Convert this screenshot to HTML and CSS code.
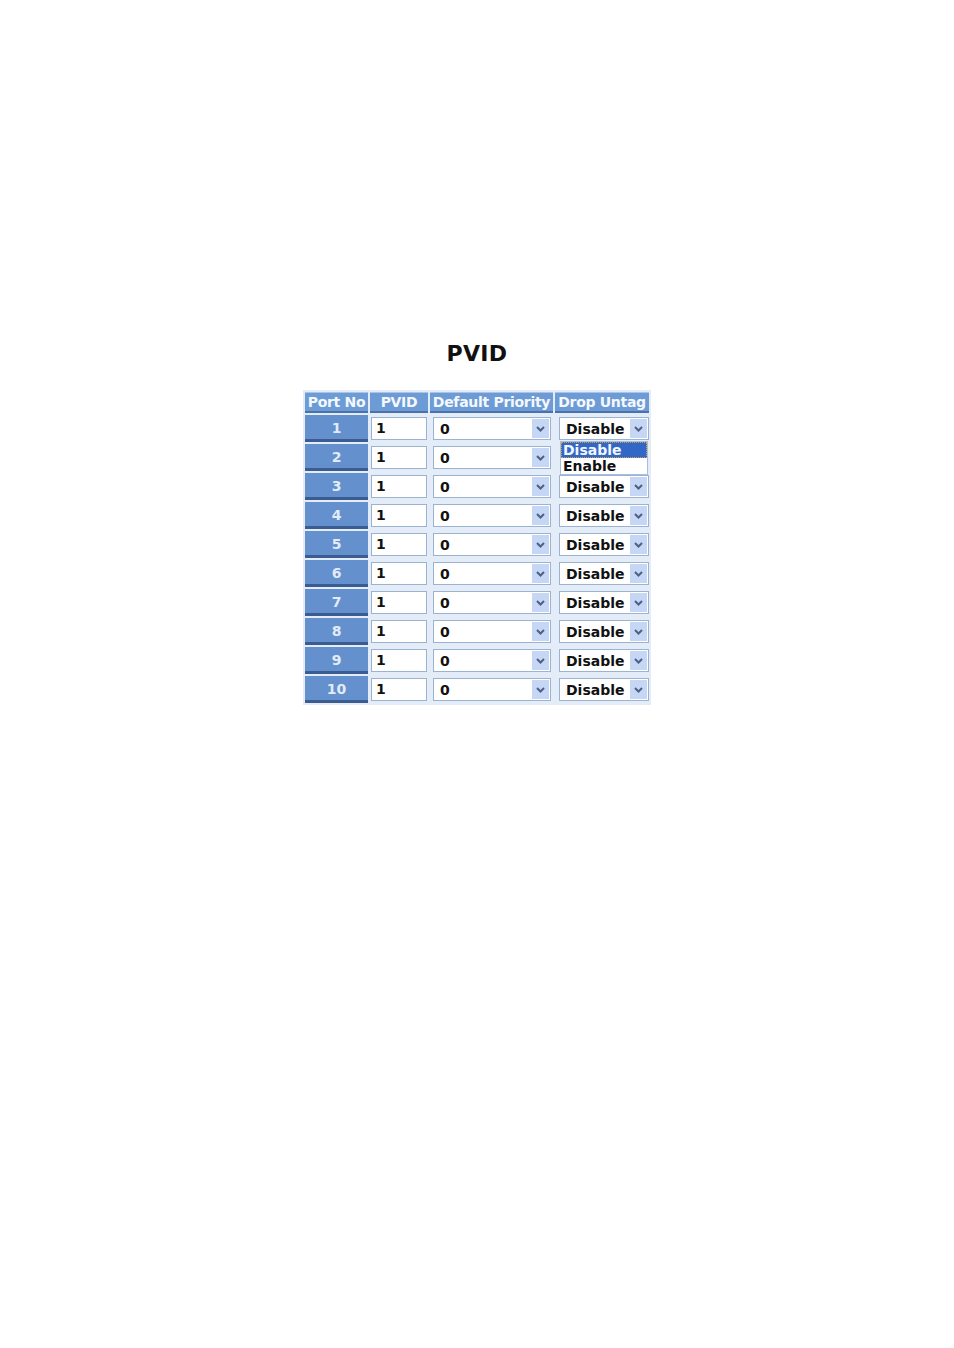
FILE: index.html
```html
<!DOCTYPE html>
<html>
<head>
<meta charset="utf-8">
<link rel="stylesheet" href="styles.css">
</head>
<body>
<div class="page">
  <h1 class="title">PVID</h1>
  <table class="grid">
    <colgroup>
      <col class="c-port"><col class="c-pvid"><col class="c-prio"><col class="c-drop">
    </colgroup>
    <thead>
      <tr><th>Port No</th><th>PVID</th><th>Default Priority</th><th>Drop Untag</th></tr>
    </thead>
    <tbody id="rows"></tbody>
  </table>
</div>
<script src="app.js"></script>
</body>
</html>
```

FILE: app.js
```js
var tb = document.getElementById('rows');
var arrow = '<span class="btn"><svg width="9" height="6" viewBox="0 0 9 6"><path d="M1 1 L4.5 4.5 L8 1" fill="none" stroke="#4d6185" stroke-width="2"/></svg></span>';
for (var i = 1; i <= 10; i++) {
  var tr = document.createElement('tr');
  var drop = '<div class="sel drop' + (i === 2 ? ' hidden' : '') + '"><span class="val">Disable</span>' + arrow + '</div>';
  if (i === 1) {
    drop += '<div class="list"><div class="opt on">Disable</div><div class="opt">Enable</div></div>';
  }
  tr.innerHTML =
    '<td class="port">' + i + '</td>' +
    '<td class="cell"><div class="inp">1</div></td>' +
    '<td class="cell"><div class="sel prio"><span class="val">0</span>' + arrow + '</div></td>' +
    '<td class="cell dropcell">' + drop + '</td>';
  tb.appendChild(tr);
}
```

FILE: styles.css
```css
html, body {
  margin: 0;
  padding: 0;
  background: #ffffff;
}
body {
  font-family: "DejaVu Sans", Verdana, sans-serif;
}
.page {
  display: flex;
  flex-direction: column;
  align-items: center;
  padding-top: 342px;
}
.title {
  margin: 0 0 24px 0;
  font-size: 22px;
  line-height: 24px;
  font-weight: bold;
  color: #111;
  letter-spacing: 0.3px;
}
.grid {
  border-collapse: separate;
  border-spacing: 2px;
  background: #e3ecf7;
  table-layout: fixed;
  width: 348px;
}
.c-port { width: 63px; }
.c-pvid { width: 58px; }
.c-prio { width: 123px; }
.c-drop { width: 94px; }
.grid th {
  height: 18px;
  padding: 0;
  background: #6d9bd6;
  border-top: 1px solid #a9c4e8;
  border-bottom: 2px solid #4b73ab;
  color: #f4f8fd;
  font-size: 14px;
  font-weight: bold;
  white-space: nowrap;
  line-height: 18px;
  letter-spacing: -0.3px;
}
.grid td {
  padding: 0;
  height: 27px;
  box-sizing: border-box;
}
.grid td.port {
  height: 27px;
  padding-top: 2px;
  background: #6490cd;
  border-bottom: 3px solid #3a5c90;
  color: #e2ebf7;
  font-size: 14px;
  font-weight: bold;
  text-align: center;
  line-height: 22px;
}
.cell {
  position: relative;
}
.inp {
  box-sizing: border-box;
  width: 56px;
  height: 23px;
  margin-left: 1px;
  background: #fff;
  border: 1px solid #9bb3d3;
  font-size: 14px;
  font-weight: bold;
  color: #111;
  line-height: 21px;
  padding-left: 4px;
}
.sel {
  box-sizing: border-box;
  height: 23px;
  background: #fff;
  border: 1px solid #9bb3d3;
  display: flex;
  align-items: center;
  justify-content: space-between;
  font-weight: bold;
  color: #111;
}
.sel.hidden {
  visibility: hidden;
}
.sel.prio {
  width: 118px;
  margin-left: 3px;
  font-size: 14px;
  padding-left: 6px;
}
.sel.drop {
  width: 90px;
  margin-left: 4px;
  font-size: 14px;
  padding-left: 6px;
}
.btn {
  width: 17px;
  height: 19px;
  margin-right: 1px;
  background: #c6d6f5;
  display: flex;
  align-items: center;
  justify-content: center;
}
.list {
  position: absolute;
  left: 5px;
  top: 26px;
  width: 88px;
  box-sizing: border-box;
  background: #fff;
  border: 1px solid #a8bedc;
  font-size: 14px;
  font-weight: bold;
  z-index: 2;
}
.opt {
  height: 16px;
  line-height: 16px;
  padding-left: 2px;
  color: #111;
}
.opt.on {
  background: #3168c8;
  color: #f2f6ff;
  outline: 1px dotted #d8a040;
  outline-offset: -1px;
}
```
